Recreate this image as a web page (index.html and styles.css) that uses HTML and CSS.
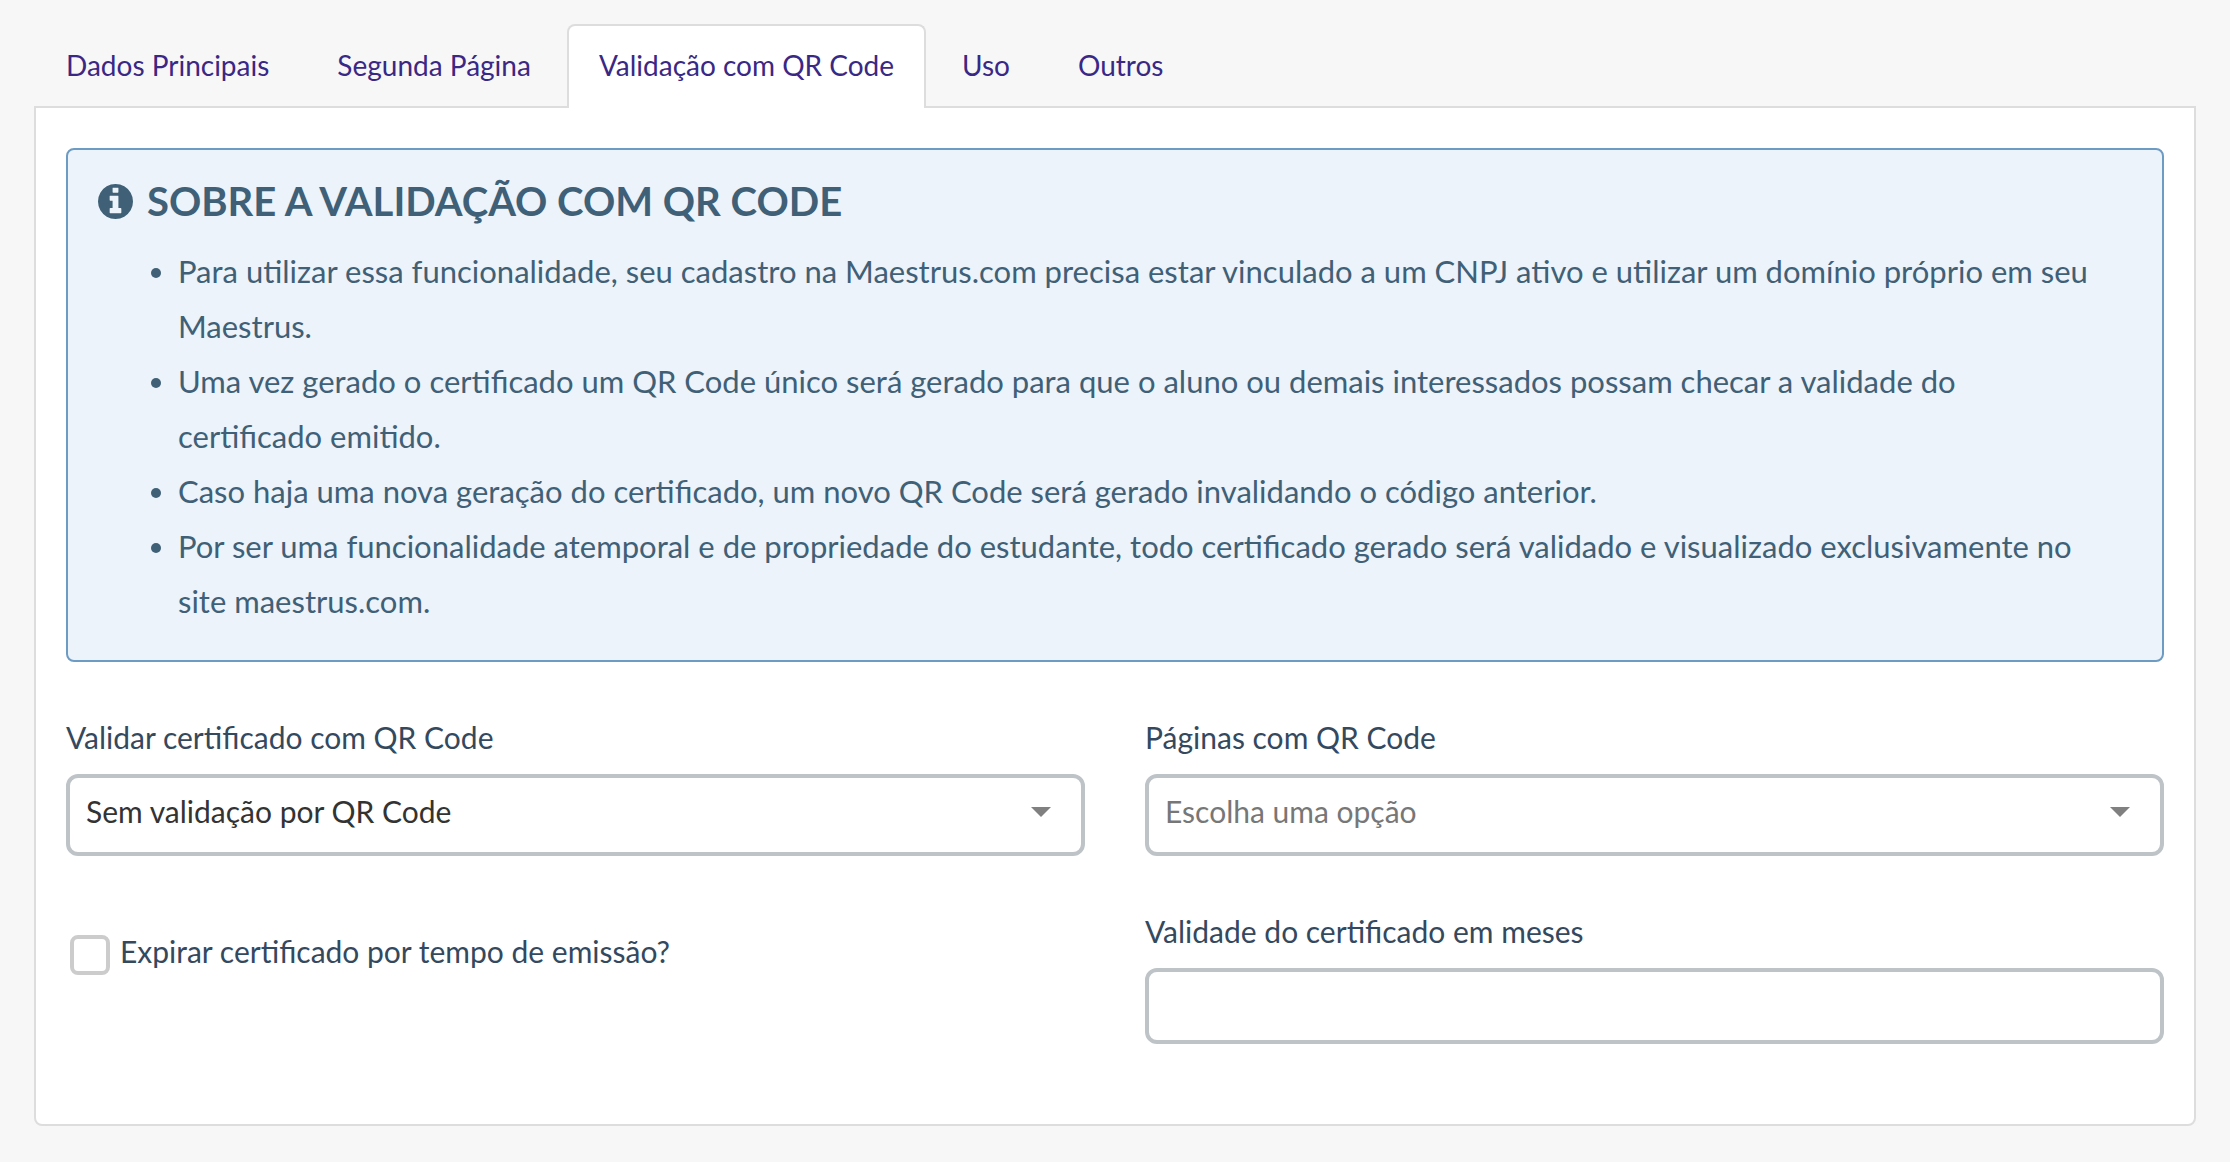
FILE: index.html
```html
<!DOCTYPE html>
<html lang="pt-BR">
<head>
    <meta charset="UTF-8">
    <meta name="viewport" content="width=device-width, initial-scale=1.0">
    <title>Certificado - Validação com QR Code</title>
    <link rel="stylesheet" href="styles.css">
</head>
<body>

    <!-- Abas -->
    <nav class="tabs">
        <a class="tab" href="#dados">Dados Principais</a>
        <a class="tab" href="#segunda">Segunda Página</a>
        <a class="tab active" href="#validacao">Validação com QR Code</a>
        <a class="tab" href="#uso">Uso</a>
        <a class="tab" href="#outros">Outros</a>
    </nav>

    <main class="panel" id="validacao">

        <!-- Aviso -->
        <section class="alert">
            <h4 class="alert-title">
                <svg class="icon" viewBox="0 128 1536 1536" aria-hidden="true"><path d="M1024 1376v-160q0-14-9-23t-23-9h-96v-512q0-14-9-23t-23-9h-320q-14 0-23 9t-9 23v160q0 14 9 23t23 9h96v320h-96q-14 0-23 9t-9 23v160q0 14 9 23t23 9h448q14 0 23-9t9-23zm-128-896v-160q0-14-9-23t-23-9h-192q-14 0-23 9t-9 23v160q0 14 9 23t23 9h192q14 0 23-9t9-23zm640 416q0 209-103 385.500t-279.500 279.500-385.500 103-385.500-103-279.500-279.500-103-385.500 103-385.500 279.500-279.500 385.500-103 385.500 103 279.500 279.500 103 385.500z"/></svg>
                SOBRE A VALIDAÇÃO COM QR CODE
            </h4>
            <ul class="alert-list">
                <li>Para utilizar essa funcionalidade, seu cadastro na Maestrus.com precisa estar vinculado a um CNPJ ativo e utilizar um domínio próprio em seu Maestrus.</li>
                <li>Uma vez gerado o certificado um QR Code único será gerado para que o aluno ou demais interessados possam checar a validade do certificado emitido.</li>
                <li>Caso haja uma nova geração do certificado, um novo QR Code será gerado invalidando o código anterior.</li>
                <li>Por ser uma funcionalidade atemporal e de propriedade do estudante, todo certificado gerado será validado e visualizado exclusivamente no site maestrus.com.</li>
            </ul>
        </section>

        <!-- Formulário -->
        <form class="form">
            <div class="field">
                <label for="validar">Validar certificado com QR Code</label>
                <div class="select">
                    <select class="control" id="validar">
                        <option>Sem validação por QR Code</option>
                        <option>Com validação por QR Code</option>
                    </select>
                </div>
            </div>

            <div class="field">
                <label for="paginas">Páginas com QR Code</label>
                <div class="select">
                    <select class="control placeholder" id="paginas">
                        <option>Escolha uma opção</option>
                        <option>Primeira página</option>
                        <option>Segunda página</option>
                    </select>
                </div>
            </div>

            <div class="check">
                <input type="checkbox" id="expirar">
                <label for="expirar">Expirar certificado por tempo de emissão?</label>
            </div>

            <div class="field">
                <label for="meses">Validade do certificado em meses</label>
                <input class="control" type="text" id="meses">
            </div>
        </form>
    </main>

</body>
</html>
```

FILE: styles.css
```css
* {
    box-sizing: border-box;
}
body {
    margin: 0;
    padding: 24px 34px 34px;
    font-family: Lato, "Liberation Sans", sans-serif;
    font-size: 30px;
    line-height: 42px;
    color: #34495e;
    background-color: #f7f7f7;
}

/* Abas */
.tabs {
    display: flex;
    gap: 4px;
}
.tab {
    padding: 19px 30px 21px;
    border: 2px solid transparent;
    border-bottom: none;
    border-radius: 8px 8px 0 0;
    font-size: 28px;
    line-height: 40px;
    color: #3a2885;
    text-decoration: none;
}
.tab.active {
    position: relative;
    margin-bottom: -2px;
    padding-bottom: 23px;
    border-color: #ddd;
    background-color: #fff;
}

.panel {
    padding: 40px 30px 80px;
    border: 2px solid #ddd;
    border-radius: 0 0 8px 8px;
    background-color: #fff;
}

/* Aviso */
.alert {
    padding: 30px 30px 31px;
    border: 2px solid #6c9bc3;
    border-radius: 8px;
    color: #3f6076;
    background-color: #ecf3fa;
}
.alert-title {
    display: flex;
    align-items: center;
    gap: 14px;
    margin: 0 0 22px;
    font-size: 40px;
    line-height: 42px;
}
.icon {
    width: 35px;
    height: 35px;
    fill: currentColor;
}
.alert-list {
    margin: 0;
    padding: 0 32px 0 80px;
    font-size: 31px;
    line-height: 55px;
}

/* Formulário */
.form {
    display: grid;
    grid-template-columns: 1fr 1fr;
    gap: 54px 60px;
    margin-top: 54px;
}
.field label {
    display: block;
    margin-bottom: 16px;
}
.control {
    display: block;
    width: 100%;
    height: 76px;
    padding: 0 16px;
    border: 4px solid #bdc3c7;
    border-radius: 12px;
    font: inherit;
    color: #333;
    background-color: #fff;
}
select.control {
    height: 82px;
    padding-bottom: 8px;
    appearance: none;
}
.control.placeholder {
    color: #777;
}
.select {
    position: relative;
}
.select::after {
    content: "";
    position: absolute;
    top: 33px;
    right: 34px;
    border: 10px solid transparent;
    border-top-color: #808080;
    border-bottom: none;
    pointer-events: none;
}
.check {
    display: flex;
    gap: 10px;
    padding: 20px 0 0 4px;
}
.check input {
    width: 40px;
    height: 40px;
    margin: 5px 0 0;
    border: 4px solid #ccc;
    border-radius: 8px;
    background-color: #fff;
    appearance: none;
}
.check input:checked {
    background-color: #3a2885;
}
```
